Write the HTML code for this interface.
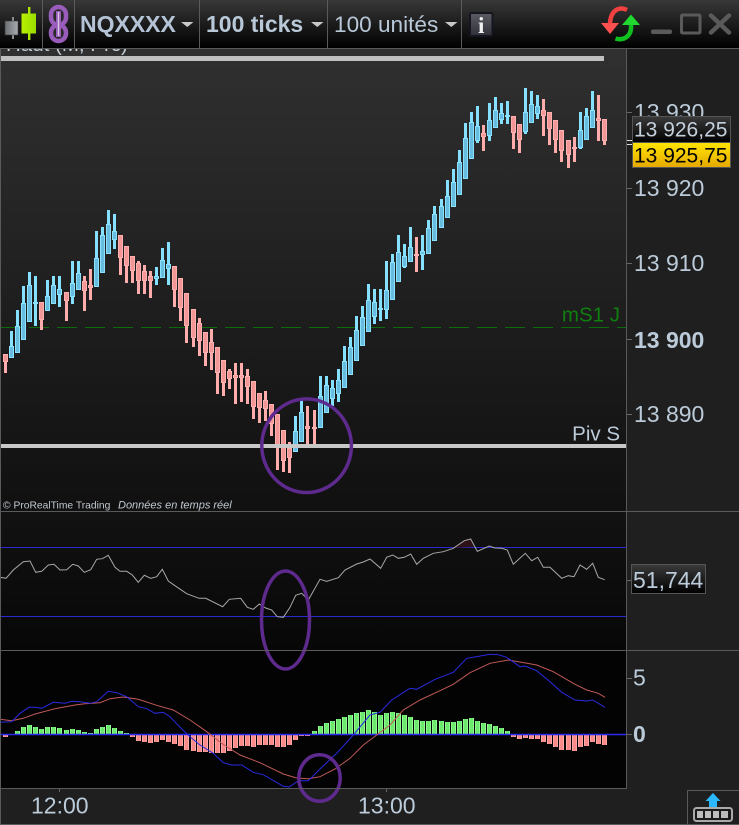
<!DOCTYPE html>
<html><head><meta charset="utf-8"><style>
html,body{margin:0;padding:0;background:#1f1f1f;width:739px;height:825px;overflow:hidden}
svg{display:block;position:absolute;left:0;top:0}
text{font-family:"Liberation Sans",sans-serif}
.ax{font-size:23px;fill:#bccbd9}
</style></head><body>
<svg width="739" height="825" viewBox="0 0 739 825" xmlns="http://www.w3.org/2000/svg">
<defs>
<linearGradient id="gm" x1="0" y1="0" x2="0" y2="1"><stop offset="0" stop-color="#303030"/><stop offset=".5" stop-color="#202020"/><stop offset="1" stop-color="#101010"/></linearGradient>
<linearGradient id="gr" x1="0" y1="0" x2="0" y2="1"><stop offset="0" stop-color="#121212"/><stop offset="1" stop-color="#070707"/></linearGradient>
<linearGradient id="gt" x1="0" y1="0" x2="0" y2="1"><stop offset="0" stop-color="#383838"/><stop offset="1" stop-color="#000"/></linearGradient>
<linearGradient id="gl" x1="0" y1="0" x2="0" y2="1"><stop offset="0" stop-color="#3a3a3a"/><stop offset="1" stop-color="#000"/></linearGradient>
<linearGradient id="gy" x1="0" y1="0" x2="0" y2="1"><stop offset="0" stop-color="#ffe600"/><stop offset="1" stop-color="#e6a800"/></linearGradient>
<linearGradient id="gi" x1="0" y1="0" x2="0" y2="1"><stop offset="0" stop-color="#5c5c64"/><stop offset="1" stop-color="#303038"/></linearGradient>
<linearGradient id="gs" x1="0" y1="0" x2="1" y2="0"><stop offset="0" stop-color="#6c7074"/><stop offset="1" stop-color="#a8acb0"/></linearGradient>
<linearGradient id="gv" x1="0" y1="0" x2="1" y2="0"><stop offset="0" stop-color="#b8f000"/><stop offset="1" stop-color="#98dc00"/></linearGradient>
<path id="hg" d="M17.5 734V731M23.5 734V727M29.5 734V725M35.5 734V727M41.5 734V729M47.5 734V727M53.5 734V727M59.5 734V728M66.5 734V730M72.5 734V729M78.5 734V730M84.5 734V732M90.5 734V733M96.5 734V729M102.5 734V727M108.5 734V725M114.5 734V728M120.5 734V731M126.5 734V733M314.5 734V731M320.5 734V726M326.5 734V723M332.5 734V721M338.5 734V719M344.5 734V717M350.5 734V715M356.5 734V713M362.5 734V712M368.5 734V710M374.5 734V712M380.5 734V715M386.5 734V713M392.5 734V712M398.5 734V713M404.5 734V715M410.5 734V717M416.5 734V720M422.5 734V721M428.5 734V721M434.5 734V720M441.5 734V721M447.5 734V722M453.5 734V722M459.5 734V721M465.5 734V719M471.5 734V718M477.5 734V721M483.5 734V723M489.5 734V724M495.5 734V726M501.5 734V728M507.5 734V731"/>
<path id="hr" d="M5.5 735V737M132.5 735V737M138.5 735V741M144.5 735V742M150.5 735V743M156.5 735V742M162.5 735V740M168.5 735V742M174.5 735V744M180.5 735V746M186.5 735V750M193.5 735V751M199.5 735V752M205.5 735V752M211.5 735V753M217.5 735V753M223.5 735V753M229.5 735V751M235.5 735V748M241.5 735V746M247.5 735V746M253.5 735V747M259.5 735V745M265.5 735V745M271.5 735V745M277.5 735V747M283.5 735V747M289.5 735V745M295.5 735V740M301.5 735V736M307.5 735V736M513.5 735V737M519.5 735V739M525.5 735V738M531.5 735V739M537.5 735V739M543.5 735V742M549.5 735V744M555.5 735V747M561.5 735V750M568.5 735V750M574.5 735V751M580.5 735V747M586.5 735V746M592.5 735V742M598.5 735V744M604.5 735V745"/>
</defs>

<!-- panels -->
<rect width="739" height="825" fill="#1f1f1f"/>
<rect x="1" y="49" width="625" height="462" fill="url(#gm)"/>
<rect x="1" y="512" width="625" height="138" fill="url(#gr)"/>
<rect x="1" y="651" width="625" height="137" fill="#030303"/>

<text x="6" y="51" font-size="20.500" fill="#c4ccd4">Haut (M, Prc)</text>
<rect x="1" y="56" width="603" height="5" fill="#c0c0c0"/>

<!-- dashed mS1 -->
<path d="M1 327.5H627" stroke="#0c6c0c" stroke-width="1" stroke-dasharray="20 8" fill="none"/>

<!-- candles -->
<g fill="none" transform="translate(.5 0)" stroke-width="3">
<path stroke="#ffacac" d="M5 354V373M41 302V330M66 292V321M84 276V311M90 269V300M120 235V275M126 246V283M132 256V283M138 261V294M144 265V294M150 271V298M174 266V307M180 278V321M186 293V343M193 309V347M199 318V356M205 332V366M211 329V370M217 347V394M223 360V396M229 369V389M235 363V404M241 363V402M247 369V404M253 381V419M259 393V423M265 391V421M271 404V436M277 414V470M283 430V472M289 442V473M307 406V444M314 410V444M416 237V272M483 125V151M513 116V149M519 124V153M543 99V136M549 112V145M555 120V153M561 130V162M568 140V168M574 137V162M598 95V141M604 119V145"/>
<path stroke="#86e0ff" d="M11 331V358M17 310V353M23 286V340M29 272V322M35 276V326M47 280V311M53 276V304M59 276V307M72 261V304M78 261V290M96 231V287M102 227V273M108 210V254M114 214V249M156 267V285M162 248V278M168 242V285M295 416V452M301 400V442M320 376V428M326 376V413M332 380V406M338 369V402M344 346V388M350 337V375M356 316V361M362 306V346M368 284V332M374 289V324M380 289V321M386 261V319M392 254V300M398 235V282M404 244V268M410 227V262M422 235V270M428 220V254M434 206V241M441 199V228M447 180V218M453 169V207M459 150V195M465 123V179M471 112V159M477 106V143M489 103V141M495 97V128M501 103V124M507 101V124M525 88V134M531 91V123M537 95V119M580 112V149M586 108V140M592 91V128"/>
</g>
<g transform="translate(.5 .5)" stroke-width="1">
<path fill="#f29696" stroke="#ffb0b0" d="M3 354h4v7h-4zM39 302h4v17h-4zM64 292h4v8h-4zM82 281h4v9h-4zM88 285h4v2h-4zM118 235h4v22h-4zM124 246h4v19h-4zM130 256h4v14h-4zM136 263h4v17h-4zM142 271h4v9h-4zM148 276h4v4h-4zM172 266h4v23h-4zM178 278h4v29h-4zM184 293h4v32h-4zM191 309h4v28h-4zM197 323h4v17h-4zM203 332h4v20h-4zM209 342h4v10h-4zM215 347h4v25h-4zM221 360h4v22h-4zM227 371h4v7h-4zM233 375h4v2h-4zM239 375h4v2h-4zM245 376h4v10h-4zM251 381h4v25h-4zM257 393h4v14h-4zM263 400h4v8h-4zM269 404h4v19h-4zM275 414h4v33h-4zM281 430h4v30h-4zM287 448h4v9h-4zM305 426h4v2h-4zM312 427h4v1h-4zM414 254h4v1h-4zM481 133h4v3h-4zM511 116h4v16h-4zM517 124h4v15h-4zM541 110h4v5h-4zM547 112h4v16h-4zM553 120h4v19h-4zM559 130h4v20h-4zM566 140h4v14h-4zM572 147h4v1h-4zM596 118h4v2h-4zM602 119h4v21h-4z"/>
<path fill="#68bce0" stroke="#8ae2ff" d="M9 346h4v11h-4zM15 326h4v26h-4zM21 303h4v36h-4zM27 285h4v36h-4zM33 302h4v1h-4zM45 296h4v14h-4zM51 285h4v18h-4zM57 289h4v5h-4zM70 283h4v13h-4zM76 273h4v16h-4zM94 258h4v28h-4zM100 235h4v37h-4zM106 224h4v29h-4zM112 231h4v8h-4zM154 276h4v2h-4zM160 260h4v17h-4zM166 264h4v4h-4zM293 431h4v20h-4zM299 412h4v29h-4zM318 396h4v31h-4zM324 385h4v27h-4zM330 388h4v10h-4zM336 380h4v13h-4zM342 361h4v26h-4zM348 347h4v27h-4zM354 330h4v30h-4zM360 317h4v28h-4zM366 300h4v31h-4zM372 302h4v14h-4zM378 308h4v1h-4zM384 290h4v19h-4zM390 262h4v37h-4zM396 252h4v29h-4zM402 256h4v10h-4zM408 247h4v14h-4zM420 251h4v3h-4zM426 228h4v25h-4zM432 214h4v26h-4zM439 206h4v21h-4zM445 196h4v21h-4zM451 182h4v24h-4zM457 162h4v32h-4zM463 138h4v40h-4zM469 122h4v36h-4zM475 126h4v14h-4zM487 120h4v15h-4zM493 110h4v17h-4zM499 113h4v6h-4zM505 115h4v1h-4zM523 112h4v19h-4zM529 104h4v18h-4zM535 106h4v7h-4zM578 130h4v17h-4zM584 116h4v23h-4zM590 110h4v17h-4z"/>
</g>

<rect x="1" y="444" width="625" height="4" fill="#c8c8c8"/>

<text x="620" y="321.5" text-anchor="end" font-size="20.5" fill="#0f7f0f">mS1 J</text>
<text x="620" y="440.5" text-anchor="end" font-size="20.5" fill="#bccbd9">Piv S</text>
<text x="3" y="508.5" font-size="10.3" fill="#c0c8d0">© ProRealTime Trading</text>
<text x="118" y="508.5" font-size="11" font-style="italic" fill="#c0c8d0">Données en temps réel</text>

<!-- RSI -->
<path d="M1 547.5H626M1 616.5H626" stroke="#2a2ad0" stroke-width="1" fill="none"/>
<path d="M453 548L464 541L471 539L474 547Z" fill="#2c1216"/>
<polyline fill="none" stroke="#a8a8a8" stroke-width="1" points="0,577.3 6,578.3 13.3,570 23.3,561.7 30,561 35.7,572.3 41.7,571.3 48.3,565 54,564.3 60,570 66.7,569.7 72.7,564.3 78.3,566 84.3,572.3 90.7,569.7 96.7,559.3 102.3,558.7 108.3,555.3 115,567.3 120,571.3 126.7,571.3 132.3,575 138.3,582.3 144.3,575.3 150.7,578.3 156.7,576.7 162.3,569.3 168.3,581 175,585.7 186.7,593.7 199,598.3 205.7,598.3 222.7,606.7 229.3,599.3 240.7,598.3 247.3,607.3 253.3,609.3 259.3,604 265.7,608 271.7,610 277.3,616.7 283.3,617.3 290,607.3 295.7,595.3 301.7,593.3 308.3,600 320,579.3 326.7,581.3 338.3,577.7 345,570 356.7,564 363.3,562 370,559 380.7,568.3 386.7,557.3 392.7,555 398.3,558.3 404.3,557.3 410.7,554 416.7,564.3 423.3,558.3 433.3,553.3 443.3,551.7 453.3,548.3 464.3,540.7 470.7,539 477.3,551.3 489.3,546 495,548 501.7,548.3 507.3,550 513.3,564.3 525.3,553.3 531.7,560.7 537.7,557.3 543.3,567.3 550,567.3 561.7,578.3 568.3,575.7 574,576.7 580,565 586.7,569.3 592.7,563.3 598.3,577.3 604.7,579.7"/>

<!-- MACD histogram -->
<use href="#hg" fill="none" stroke="#92fa92" stroke-width="5"/>
<use href="#hg" fill="none" stroke="#6ce86c" stroke-width="3"/>
<use href="#hr" fill="none" stroke="#ffa8a8" stroke-width="5"/>
<use href="#hr" fill="none" stroke="#f88a8a" stroke-width="3"/>
<path d="M1 734.5H626" stroke="#2a2af0" stroke-width="1.4" fill="none"/>
<polyline fill="none" stroke="#c05a58" stroke-width="1" points="0,719.3 11.7,720.7 23.3,718.3 35,714 55,708.7 75,705 85,703.7 100,702.7 110,698.7 123.3,697 138.3,699.3 156.7,705.3 173.3,710 190,720 206.7,731.7 221.7,743.3 240,755 260,762.7 283.3,774 296.7,778 308.3,778.7 320,776.7 335,769 350,758.3 363.3,745 376.7,735 390,725 403.3,710 420,700 440,690.7 453.3,684.3 470,672.7 490,663.3 508.3,660 520,662 536.7,665 553.3,671.7 575,684.3 586.7,690 598.3,693.3 605,697.3"/>
<polyline fill="none" stroke="#2a2ae0" stroke-width="1" points="0,722.3 11.7,721.7 20,713.3 29,707.3 35,707.3 41.7,708.3 53.3,702.3 65,703.3 71.7,701.3 80,701.7 90,703.3 96.7,701.7 108.3,691.3 116.7,692.7 126.7,696.7 138.3,706.7 146.7,708.7 155,713.3 163.3,712.3 170,716.7 180,727.3 190,736.7 200,745 213.3,753.3 223.3,762.7 231.7,765 241.7,765 253.3,772.3 263.3,774.7 283.3,786.3 289.3,787 298.3,780.7 308.3,780.7 320,769 336.7,753.3 353.3,735 370,715 380,712.3 391.7,700 410,688.3 416.7,689.3 435,679.3 453.3,672.3 466.7,658.3 473.3,657.3 490,654.3 498.3,654.7 506.7,657.3 520,666.7 525,666 536.7,670.7 550,681.7 561.7,692.3 575,700 586.7,701 592.7,700 605,707.3"/>

<!-- purple ellipses -->
<g fill="none" stroke="#5e2a8e" stroke-width="3.500">
<ellipse cx="306.6" cy="445.7" rx="44.8" ry="46.8"/>
<ellipse cx="285.5" cy="620" rx="24" ry="49"/>
<ellipse cx="319.5" cy="778" rx="20.7" ry="23.2"/>
</g>

<!-- frame lines -->
<path d="M.5 49V825M626.5 49V788M0 511.5H739M1 650.5H739M0 788.5H627M0 824.5H739" stroke="#5a5a5a" stroke-width="1" fill="none"/>
<path d="M627 112.5h5M627 188.5h5M627 263.5h5M627 339.5h5M627 414.5h5M627 580.5h4M627 678.5h5M627 734.5h5M59.5 789v3M386.5 789v3" stroke="#666" stroke-width="1" fill="none"/>
<path d="M627 140.5h5M627 144.5h5" stroke="#ddd" stroke-width="1" fill="none"/>

<!-- axis labels -->
<text class="ax" x="634" y="120">13 930</text>
<text class="ax" x="634" y="196">13 920</text>
<text class="ax" x="634" y="271">13 910</text>
<text class="ax" x="634" y="348" font-weight="bold">13 900</text>
<text class="ax" x="634" y="422">13 890</text>
<rect x="632.5" y="116.5" width="98" height="26" fill="url(#gl)" stroke="#555"/>
<rect x="632.5" y="142.5" width="98" height="25" fill="url(#gy)" stroke="#555"/>
<text x="634" y="136.5" font-size="21" fill="#c4d0dc">13 926,25</text>
<text x="634" y="162.5" font-size="21" fill="#000">13 925,75</text>
<rect x="631.5" y="564.5" width="74" height="29" fill="url(#gl)" stroke="#555"/>
<text class="ax" x="633" y="588">51,744</text>
<text class="ax" x="633" y="685.5">5</text>
<text class="ax" x="633" y="742" font-weight="bold">0</text>
<text class="ax" x="31" y="813.5">12:00</text>
<text class="ax" x="358" y="813.5">13:00</text>

<!-- bottom-right button -->
<path d="M687.5 825V790.5H739" fill="none" stroke="#5a5a5a"/>
<path d="M713 793L720.5 801H717V808H709V801H705.5Z" fill="#2ab8ff"/>
<rect x="694" y="808" width="38" height="13" rx="2.5" fill="#1a1a1a" stroke="#aaa" stroke-width="2"/>
<path d="M697 811h6v7h-6zM705 811h6v7h-6zM713 811h6v7h-6zM721 811h7v7h-7z" fill="#bcbcbc"/>

<!-- toolbar -->
<rect x="0" y="0" width="739" height="48" fill="url(#gt)"/>
<path d="M0 48.5H739M42.5 0V48M74.5 0V48M199.5 0V48M327.5 0V48M461.5 0V48" stroke="#5a5a5a" stroke-width="1" fill="none"/>
<path d="M12 17h2v22h-2z" fill="#8c9094"/>
<rect x="5" y="21" width="13" height="14" fill="url(#gs)" stroke="#3a3a3a" stroke-width=".6"/>
<path d="M28 7h2.4v33H28z" fill="#a8e600"/>
<rect x="21.5" y="13.5" width="14.5" height="20" fill="url(#gv)"/>
<rect x="51" y="7" width="15" height="18" rx="7.5" fill="#2a2a2a" stroke="#9a5cba" stroke-width="4.5"/>
<rect x="51" y="25" width="15" height="16" rx="7.5" fill="#2a2a2a" stroke="#9a5cba" stroke-width="4.5"/>
<path d="M58.5 11V37" stroke="#9a5cba" stroke-width="5"/>
<path d="M58.5 12V36" stroke="#d8c8e0" stroke-width="1.4"/>
<text x="80" y="32" font-size="23" font-weight="bold" fill="#b4c4d6">NQXXXX</text>
<path d="M181 22h12.5l-6.2 5z" fill="#c8c8c8"/>
<text x="206" y="32" font-size="23" font-weight="bold" fill="#b8c8d8">100 ticks</text>
<path d="M311 22h12.5l-6.2 5z" fill="#c8c8c8"/>
<text x="334" y="32" font-size="22.6" fill="#b8c8d8">100 unités</text>
<path d="M445 22h12.5l-6.2 5z" fill="#c8c8c8"/>
<rect x="470" y="13" width="22.5" height="23" rx="1.5" fill="url(#gi)" stroke="#15151f" stroke-width="2"/>
<text x="481.2" y="33" text-anchor="middle" font-size="23" font-weight="bold" fill="#f0f0f0" style="font-family:'Liberation Serif',serif">i</text>
<path d="M627 10C620 6.500 611 9 610 23" fill="none" stroke="#f04040" stroke-width="4.500"/>
<path d="M601 23H619L610 34Z" fill="#ff5050"/>
<path d="M615.500 38.500C624 41 632 36 631 25" fill="none" stroke="#10c020" stroke-width="4.500"/>
<path d="M622 25H640L631 14.500Z" fill="#20d830"/>
<rect x="651" y="29.500" width="21" height="4.500" rx="2" fill="#5a5a5a"/>
<rect x="681.500" y="15" width="18.500" height="18" rx="1" fill="none" stroke="#5a5a5a" stroke-width="3"/>
<path d="M711 15.500L729 32.500M729 15.500L711 32.500" stroke="#5a5a5a" stroke-width="4.500" stroke-linecap="round" fill="none"/>
</svg>
</body></html>
